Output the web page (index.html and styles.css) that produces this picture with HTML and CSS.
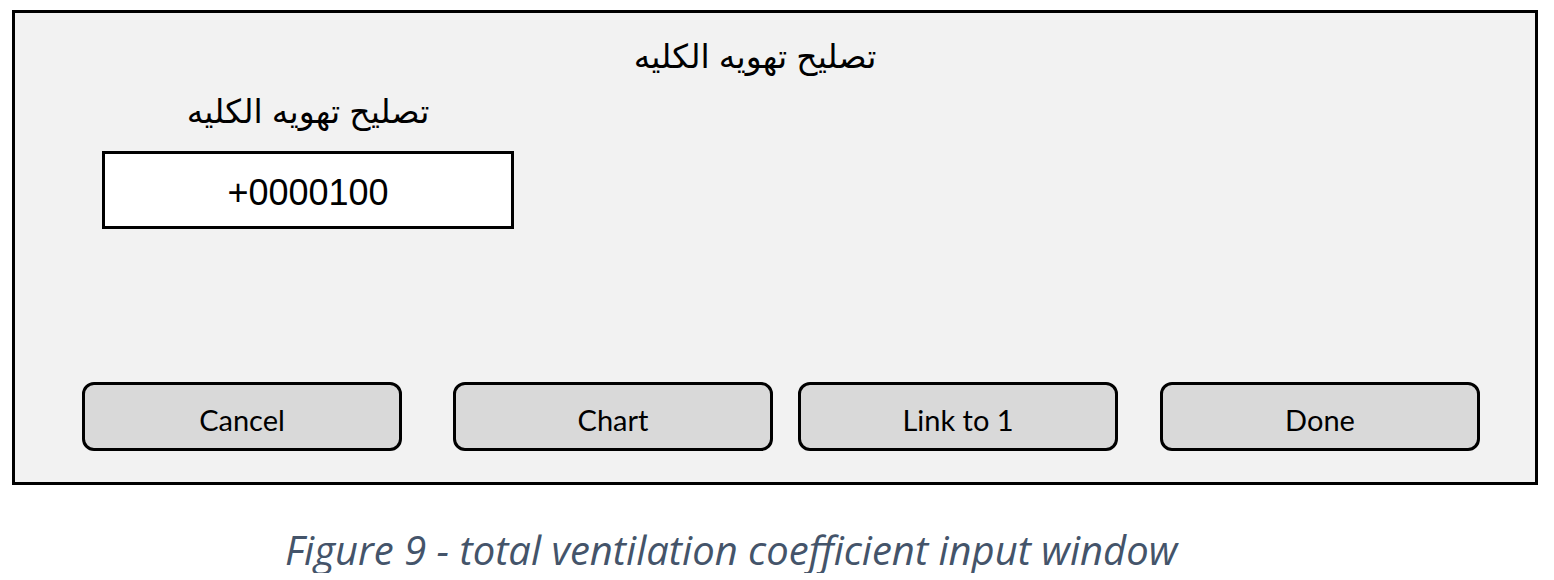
FILE: index.html
```html
<!DOCTYPE html>
<html lang="en">
<head>
  <meta charset="UTF-8">
  <meta name="viewport" content="width=device-width, initial-scale=1.0">
  <title>Total Ventilation Coefficient</title>
  <link rel="stylesheet" href="styles.css">
</head>
<body>

<div class="window">
  <div class="window-title" dir="rtl">تصليح تهويه الكليه</div>
  <div class="field">
    <div class="field-label" dir="rtl">تصليح تهويه الكليه</div>
    <div class="field-box">+0000100</div>
  </div>
  <div class="buttons">
    <button class="btn">Cancel</button>
    <button class="btn btn-chart">Chart</button>
    <button class="btn btn-link">Link to 1</button>
    <button class="btn btn-done">Done</button>
  </div>
</div>

<div class="caption">Figure 9 - total ventilation coefficient input window</div>

</body>
</html>
```

FILE: styles.css
```css
body {
  margin: 0;
  padding: 10px 0 0 12px;
  background-color: #fff;
  font-family: "Liberation Sans", "DejaVu Sans", sans-serif;
}
.window {
  width: 1520px;
  height: 469px;
  border: 3px solid #000;
  background-color: #f2f2f2;
  display: flex;
  flex-direction: column;
}
.window-title {
  text-align: center;
  font-size: 33px;
  line-height: 38px;
  padding: 25px 40px 0 0;
  color: #000;
}
.field {
  width: 412px;
  margin-left: 87px;
  margin-top: 17px;
  display: flex;
  flex-direction: column;
  align-items: center;
}
.field-label {
  font-size: 33px;
  line-height: 38px;
}
.field-box {
  box-sizing: border-box;
  width: 412px;
  height: 78px;
  margin-top: 20px;
  padding-top: 5px;
  border: 3px solid #000;
  background-color: #fff;
  font-size: 36px;
  display: flex;
  align-items: center;
  justify-content: center;
}
.buttons {
  margin-top: auto;
  padding: 0 0 31px 67px;
  display: flex;
}
.btn {
  box-sizing: border-box;
  width: 320px;
  height: 69px;
  border: 3px solid #000;
  border-radius: 12px;
  background-color: #d9d9d9;
  font-family: Lato, "Open Sans", sans-serif;
  font-size: 29px;
  color: #000;
  padding: 5px 0 0;
}
.btn-chart {
  margin-left: 51px;
}
.btn-link {
  margin-left: 25px;
}
.btn-done {
  margin-left: 42px;
}
.caption {
  margin-top: 42px;
  padding-left: 273px;
  font-family: "Open Sans", sans-serif;
  font-style: italic;
  font-size: 40px;
  line-height: 46px;
  color: #44546a;
}
```
